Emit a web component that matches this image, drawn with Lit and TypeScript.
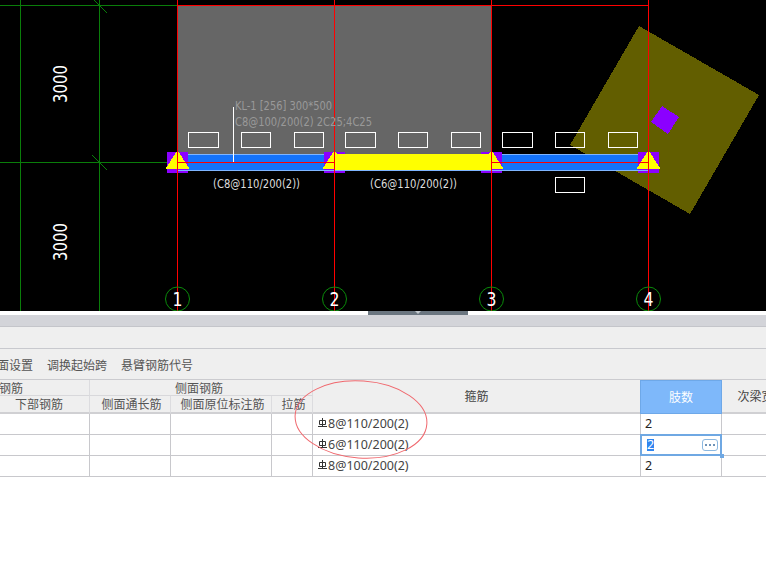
import { LitElement, html, svg, css } from "lit";
import { customElement } from "lit/decorators.js";

const GRID_X = [177.5, 334.5, 491.5, 648.5];
const BOXES = [
  [188, 30],
  [241, 29],
  [294, 29],
  [345, 30],
  [398, 29],
  [451, 29],
  [502, 30],
  [555, 29],
  [608, 29],
];
const ROWS = ["8@110/200(2)", "6@110/200(2)", "8@100/200(2)"];

@customElement("app-root")
export class AppRoot extends LitElement {
  static styles = css`
    :host {
      display: block;
      width: 766px;
      height: 575px;
      overflow: hidden;
      background: #fff;
      font-family: "Noto Sans CJK SC", "Noto Sans", sans-serif;
      font-size: 12px;
      color: #555;
    }
    .canvas { display: block; background: #000; }
    .canvas text { font-family: "DejaVu Sans", sans-serif; }
    .splitter { height: 4px; background: #fff; }
    .handle { width: 100px; height: 4px; background: #6b7680; display: flex; justify-content: center; margin-left: 368px; }
    .handle i { width: 0; height: 0; border: 3px solid transparent; border-top-color: #c4cad0; border-bottom: 0; }
    .band { height: 11px; background: #d3d4d9; border-bottom: 1px solid #c4c5ca; }
    .bar { height: 21px; background: #efefef; border-bottom: 1px solid #c8c9ce; }
    .tools {
      height: 30px;
      background: #efefef;
      border-bottom: 1px solid #cbcbcf;
      display: flex;
      align-items: center;
      gap: 14px;
      margin-left: -15px;
      white-space: nowrap;
    }
    .wrap { position: relative; }
    .table {
      display: grid;
      grid-template-columns: 80px 101px 81px 101px 41px 328px 81px 80px;
      grid-template-rows: 16px 18px 21px 21px 21px;
      margin-left: -91px;
      width: 893px;
    }
    .th {
      background: #efefef;
      display: flex;
      align-items: center;
      justify-content: center;
      border-right: 1px solid #dcdcdf;
      border-bottom: 1px solid #d8d8db;
      white-space: nowrap;
      overflow: hidden;
      line-height: 1;
    }
    .th.low { border-bottom: 2px solid #d0d0d3; }
    .th.shift { padding-left: 3px; }
    .th.tall { grid-row: span 2; border-bottom: 2px solid #d0d0d3; border-right-color: #cfcfd3; color: #444; }
    .th.group { grid-column: span 2; }
    .th.group3 { grid-column: span 3; padding-right: 4px; }
    .th.on { background: #7eb8fa; color: #fff; border: 1px solid #6ea8e8; margin-left: -1px; }
    .td {
      background: #fff;
      border-right: 1px solid #c8c8cc;
      border-bottom: 1px solid #c8c8cc;
      display: flex;
      align-items: center;
      padding-left: 4px;
      color: #222;
      white-space: nowrap;
      overflow: hidden;
      font-family: "Noto Sans", sans-serif;
      font-size: 12.5px;
      line-height: 1;
      position: relative;
    }
    .td.stirrup { color: #444; padding-left: 5px; }
    .td.stirrup svg { margin-right: 1px; margin-top: -3px; flex: none; }
    .td.active {
      border: 2px solid #6fa8e3;
      margin: -1px 0 0 -1px;
      padding-left: 5px;
      overflow: visible;
      z-index: 1;
    }
    .sel { background: #2f86f0; color: #fff; padding: 0; }
    .more {
      position: absolute;
      right: 2px;
      top: 3px;
      width: 14px;
      height: 10px;
      border: 1px solid #8cb8e0;
      border-radius: 3px;
      display: flex;
      align-items: center;
      justify-content: center;
      gap: 2px;
    }
    .more i { width: 2px; height: 2px; background: #6f93b8; }
    .grip {
      position: absolute;
      right: -4px;
      bottom: -4px;
      width: 4px;
      height: 4px;
      background: #6fa8e3;
    }
    .ring { position: absolute; left: 0; top: 0; pointer-events: none; z-index: 2; }
  `;

  renderCanvas() {
    return html`
      <svg class="canvas" width="766" height="311" viewBox="0 0 766 311">
        <g shape-rendering="crispEdges">
          <rect x="177" y="5" width="314" height="149" fill="#666"></rect>
          <polygon points="639,26 759,95 690,214 570,145" fill="#625e00"></polygon>
          <polygon points="662,106 679,117 668,134 651,122" fill="#8b00ff"></polygon>
          <g stroke="#0a7d0a" fill="none">
            <path d="M20.5 0V311M99.5 0V311M0 5.5H177M0 162.5H177"></path>
            <path d="M94 0L107 13M92 155L107 170"></path>
          </g>
          <path d="M177 5.5H648.5" stroke="#f00"></path>
          <rect x="177" y="154" width="472" height="17" fill="#1473fb"></rect>
          <path d="M177 154.5H648.5" stroke="#7fb5ff"></path>
          ${GRID_X.map(
            (x) => svg`<rect x=${x - 10.5} y="152" width="21" height="21" fill="#8b00ff"></rect>`
          )}
          <rect x="335" y="154" width="156" height="16" fill="#ff0"></rect>
          <path d="M177.5 170.5H648.5" stroke="#7fb5ff"></path>
          ${GRID_X.map(
            (x) => svg`<polygon points="${x},150 ${x + 12},169 ${x - 12},169" fill="#ff0"></polygon>`
          )}
          <path d="M177 162.5H335M492 162.5H648" stroke="#f00"></path>
          <path d="M233.5 107V162" stroke="#fff"></path>
          ${GRID_X.map((x) => svg`<path d="M${x} 0V311" stroke="#f00"></path>`)}
          <g fill="none" stroke="#fff">
            ${BOXES.map(
              ([x, w]) => svg`<rect x=${x + 0.5} y="132.5" width=${w} height="15"></rect>`
            )}
            <rect x="555.5" y="177.5" width="29" height="15"></rect>
          </g>
        </g>
        <g fill="#999" font-size="12">
          <text x="235" y="110" textLength="97" lengthAdjust="spacingAndGlyphs">KL-1 [256] 300*500</text>
          <text x="235" y="126" textLength="137" lengthAdjust="spacingAndGlyphs">C8@100/200(2) 2C25;4C25</text>
        </g>
        <g fill="#ddd" font-size="12">
          <text x="213" y="188" textLength="87" lengthAdjust="spacingAndGlyphs">(C8@110/200(2))</text>
          <text x="370" y="188" textLength="87" lengthAdjust="spacingAndGlyphs">(C6@110/200(2))</text>
        </g>
        <g fill="#fff" font-size="19">
          <text transform="translate(67 103) rotate(-90)" textLength="38" lengthAdjust="spacingAndGlyphs">3000</text>
          <text transform="translate(67 261) rotate(-90)" textLength="38" lengthAdjust="spacingAndGlyphs">3000</text>
        </g>
        ${GRID_X.map(
          (x, i) => svg`
            <circle cx=${x} cy="299" r="12" fill="none" stroke="#0a8a0a"></circle>
            <text x=${x - 5} y="306" fill="#fff" font-size="19" textLength="10" lengthAdjust="spacingAndGlyphs">${i + 1}</text>
          `
        )}
      </svg>
    `;
  }

  renderBar() {
    // the rebar grade mark used in front of stirrup specs
    return html`
      <svg width="9" height="10" viewBox="0 0 9 10">
        <path d="M1.5 2.5H7.5V6.5H1.5ZM4.5 0V8M0 8.5H9" fill="none" stroke="#333" stroke-width="1"></path>
      </svg>
    `;
  }

  render() {
    return html`
      ${this.renderCanvas()}
      <div class="splitter"><div class="handle"><i></i></div></div>
      <div class="band"></div>
      <div class="bar"></div>
      <div class="tools">
        <span>截面设置</span>
        <span>调换起始跨</span>
        <span>悬臂钢筋代号</span>
      </div>
      <div class="wrap">
        <div class="table">
          <div class="th group">纵向钢筋</div>
          <div class="th group3">侧面钢筋</div>
          <div class="th tall" style="grid-column: 6; grid-row: 1 / span 2">箍筋</div>
          <div class="th tall on" style="grid-column: 7; grid-row: 1 / span 2">肢数</div>
          <div class="th tall" style="grid-column: 8; grid-row: 1 / span 2">次梁宽度</div>
          <div class="th low">上部钢筋</div>
          <div class="th low">下部钢筋</div>
          <div class="th low shift">侧面通长筋</div>
          <div class="th low shift">侧面原位标注筋</div>
          <div class="th low shift">拉筋</div>
          ${ROWS.map(
            (spec, i) => html`
              <div class="td"></div>
              <div class="td"></div>
              <div class="td"></div>
              <div class="td"></div>
              <div class="td"></div>
              <div class="td stirrup">${this.renderBar()}${spec}</div>
              ${i === 1
                ? html`<div class="td active">
                    <span class="sel">2</span>
                    <div class="more"><i></i><i></i><i></i></div>
                    <div class="grip"></div>
                  </div>`
                : html`<div class="td">2</div>`}
              <div class="td"></div>
            `
          )}
        </div>
        <svg class="ring" width="766" height="100" viewBox="0 380 766 100">
          <ellipse
            cx="361"
            cy="419.5"
            rx="66"
            ry="38.5"
            transform="rotate(4 361 419.5)"
            fill="none"
            stroke="#f0686e"
          ></ellipse>
        </svg>
      </div>
    `;
  }
}
